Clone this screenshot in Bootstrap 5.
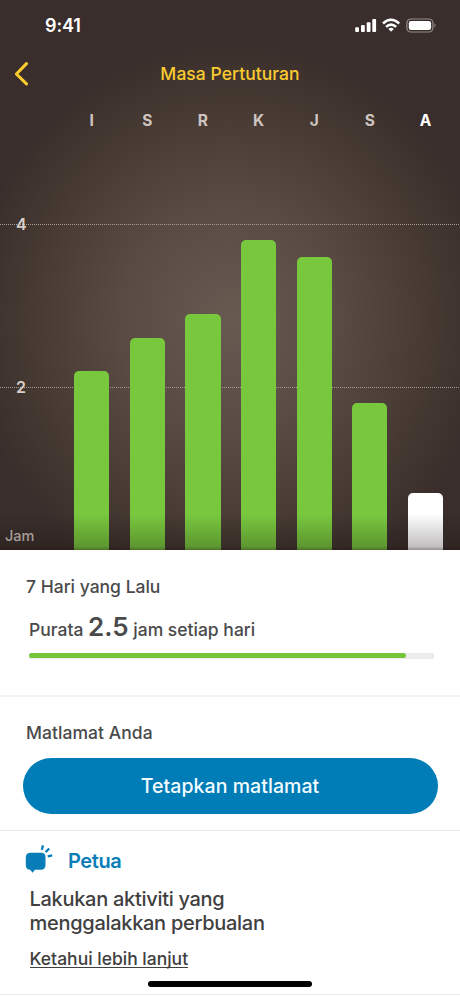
<!DOCTYPE html>
<html lang="ms">
<head>
<meta charset="utf-8">
<meta name="viewport" content="width=device-width, initial-scale=1">
<title>Masa Pertuturan</title>
<link href="https://cdn.jsdelivr.net/npm/bootstrap@5.3.0/dist/css/bootstrap.min.css" rel="stylesheet">
<style>
body{font-family:Inter,"Liberation Sans",sans-serif;color:#4a4a4b;font-weight:500;background:#fff;height:996px;overflow:hidden}
.hero{height:550px;background:radial-gradient(ellipse 262px 280px at 50% 320px,#675a51 0%,#594b43 42%,#473b33 74%,#392e2b 100%)}
.status{height:50px;padding:1px 23px 0 45px;font-size:18px;font-weight:600;letter-spacing:-.1px}
.topnav{height:47px}
.topnav h1{font-size:17.5px;font-weight:500;color:#fbcb2f;letter-spacing:.05px}
.back{left:13px;top:11px}
.days,.bars{display:grid;grid-template-columns:repeat(7,1fr);padding:0 6.7px 0 63.8px}
.days{height:47px;font-size:15.5px;font-weight:700;color:#cfc5c0;text-align:center;line-height:47px}
.plot{height:406px}
.bars{height:406px;align-items:end;justify-items:center}
.bar{width:35.3px;border-radius:5px 5px 0 0;background:#78c83e}
.gridline{height:1px;background:repeating-linear-gradient(90deg,#a69c94 0 1px,transparent 1px 2px)}
.tick{left:16px;font-size:16px;line-height:20px;color:#d8cfca;font-weight:600}
.unit{left:5px;bottom:4px;font-size:14.5px;line-height:20px;color:#a59d99}
.fade-low{height:36px;background:linear-gradient(transparent,rgba(20,12,10,.26) 90%,rgba(20,12,10,.45))}
.week{height:145px;padding:24px 26px 0}
.sec-title{font-size:17.5px;line-height:26px}
.avg{font-size:17.5px;line-height:34px;margin:10px 0 0 3px}
.avg strong{font-size:26px;font-weight:600}
.progress{--bs-progress-height:6px;--bs-progress-bg:#ececec;border-radius:0;margin:6px 0 0 3px;width:405px}
.progress-bar{height:5px;border-radius:3px;background:#74c53a}
.goal{height:135px;border-top:2px solid #f3f3f3;padding:23px 22.5px 0}
.goal .sec-title{padding-left:3.5px;letter-spacing:.05px}
.btn-goal{height:56px;margin-top:12px;background:#007cb7;color:#f3fcff;font-size:19.5px;font-weight:500;letter-spacing:.06px;padding:2px 0 0;border:0}
.tip{height:165px;border-top:1px solid #ebebeb;border-bottom:1px solid #ededed;padding:14px 25px 0}
.tip h2{font-size:20px;font-weight:600;color:#087db8;line-height:32px;margin:0 0 0 15px;letter-spacing:-.4px}
.tip p{font-size:20px;line-height:24px;color:#404040;margin:10px 0 0 4.5px;letter-spacing:-.29px}
.tip a{font-size:17.5px;line-height:24px;color:#404040;margin:12px 0 0 4.5px;text-decoration:none;border-bottom:1px solid #404040;display:inline-block;height:21px}
.home{left:148px;top:981px;width:164px;height:6px;background:#000}
</style>
<script src="https://cdn.jsdelivr.net/npm/bootstrap@5.3.0/dist/js/bootstrap.bundle.min.js"></script>
</head>
<body class="position-relative">
<header class="hero d-flex flex-column">
  <div class="status d-flex justify-content-between align-items-center text-white">
    <span>9:41</span>
    <svg width="82" height="16" viewBox="0 0 82 16" fill="#fff">
      <rect x="0.2" y="9.3" width="3.8" height="4.7" rx="1"/><rect x="6" y="7" width="3.8" height="7" rx="1"/><rect x="11.7" y="4.2" width="3.8" height="9.8" rx="1"/><rect x="17.3" y="1" width="3.8" height="13" rx="1"/>
      <g fill="none" stroke="#fff" stroke-width="2.5"><path d="M28 5.5Q36 -2.1 44.2 5.5"/><path d="M31 8.9Q36 4.3 41.2 8.9"/></g><path d="M33.4 10.9Q36.1 8.8 38.8 10.9L36.1 13.8Z"/>
      <rect x="51.9" y="1" width="26" height="13" rx="4" fill="none" stroke="#968e8b" stroke-width="1.2"/><rect x="53.8" y="2.9" width="22.3" height="9.2" rx="2.3"/><path d="M79.5 5.3q2.1 2.2 0 4.4z" fill="#968e8b"/>
    </svg>
  </div>
  <nav class="topnav position-relative d-flex align-items-center justify-content-center">
    <svg class="back position-absolute" width="18" height="26" viewBox="0 0 18 26" fill="none" stroke="#fbcb2f" stroke-width="3.1" stroke-linecap="round" stroke-linejoin="round"><path d="M13.5 2.7 3.4 13 13.5 22.8"/></svg>
    <h1 class="m-0">Masa Pertuturan</h1>
  </nav>
  <div class="days"><span>I</span><span>S</span><span>R</span><span>K</span><span>J</span><span>S</span><span class="text-white">A</span></div>
  <div class="plot position-relative">
    <div class="gridline position-absolute w-100" style="top:80px"></div>
    <div class="gridline position-absolute w-100" style="top:243px"></div>
    <span class="tick position-absolute" style="top:70px">4</span>
    <span class="tick position-absolute" style="top:233px">2</span>
    <div class="bars position-relative">
      <div class="bar" style="height:179.3px"></div>
      <div class="bar" style="height:212px"></div>
      <div class="bar" style="height:236.3px"></div>
      <div class="bar" style="height:309.7px"></div>
      <div class="bar" style="height:293.3px"></div>
      <div class="bar" style="height:146.7px"></div>
      <div class="bar bg-white" style="height:57.3px"></div>
    </div>
    <div class="fade-low position-absolute bottom-0 w-100"></div>
    <span class="unit position-absolute">Jam</span>
  </div>
</header>
<main>
  <section class="week">
    <div class="sec-title"><span>7 Hari yang Lalu</span></div>
    <div class="avg"><span>Purata <strong>2.5</strong> jam setiap hari</span></div>
    <div class="progress"><div class="progress-bar" style="width:93.2%"></div></div>
  </section>
  <section class="goal">
    <div class="sec-title"><span>Matlamat Anda</span></div>
    <button class="btn btn-goal rounded-pill w-100" type="button">Tetapkan matlamat</button>
  </section>
  <section class="tip">
    <div class="d-flex align-items-center">
      <svg class="overflow-visible" width="28" height="28" viewBox="0 0 28 28" fill="#087db8"><path d="M5.5 5.8h10.8q4.2 0 4.2 4.2v8q0 4.7-4.7 4.7H10L7.5 25.8 5.3 22.7Q.8 22.7.8 18v-7.5Q.8 5.8 5.5 5.8Z"/><g stroke="#087db8" stroke-width="2.3" stroke-linecap="butt"><path d="M16.8 2.9 18-1.6M20.6 5.1 24.2 1.5M22.7 9.4 27.2 8.3"/></g></svg>
      <h2>Petua</h2>
    </div>
    <p>Lakukan aktiviti yang<br>menggalakkan perbualan</p>
    <a href="#">Ketahui lebih lanjut</a>
  </section>
</main>
<div class="home position-absolute rounded-pill"></div>
</body>
</html>
